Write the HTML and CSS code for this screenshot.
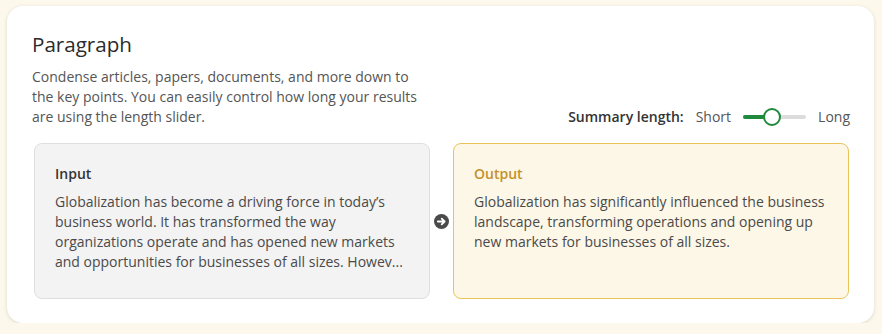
FILE: index.html
```html
<!DOCTYPE html>
<html lang="en">
<head>
    <meta charset="UTF-8">
    <meta name="viewport" content="width=device-width, initial-scale=1.0">
    <title>Paragraph Summarizer</title>
    <link rel="stylesheet" href="styles.css">
</head>
<body>
    <div class="card">
        <div class="card-head">
            <div class="intro">
                <h2>Paragraph</h2>
                <p>Condense articles, papers, documents, and more down to the key points. You can easily control how long your results are using the length slider.</p>
            </div>
            <div class="length">
                <span class="length-label">Summary length:</span>
                <span>Short</span>
                <div class="slider">
                    <div class="slider-fill"></div>
                    <div class="slider-thumb"></div>
                </div>
                <span>Long</span>
            </div>
        </div>
        <div class="compare">
            <div class="box box-input">
                <h3>Input</h3>
                <p>Globalization has become a driving force in today’s business world. It has transformed the way organizations operate and has opened new markets and opportunities for businesses of all sizes. Howev...</p>
            </div>
            <div class="arrow">
                <svg width="15" height="15" viewBox="0 0 14 14">
                    <circle cx="7" cy="7" r="7" fill="#4a4a4a"/>
                    <path d="M3.6 7h6.2M7.2 4.3L9.9 7 7.2 9.7" stroke="#fff" stroke-width="1.7" fill="none" stroke-linecap="round" stroke-linejoin="round"/>
                </svg>
            </div>
            <div class="box box-output">
                <h3>Output</h3>
                <p>Globalization has significantly influenced the business landscape, transforming operations and opening up new markets for businesses of all sizes.</p>
            </div>
        </div>
    </div>
</body>
</html>
```

FILE: styles.css
```css
body {
    font-family: "Open Sans", sans-serif;
    background-color: #fdf8ec;
    margin: 0;
    padding: 6px 8px 0 7px;
    color: #333;
}
.card {
    background-color: white;
    border-radius: 16px;
    box-shadow: 0 1px 4px rgba(0, 0, 0, 0.12);
    padding: 24px 24px 25px 25px;
    height: 268px;
}
.card-head {
    display: flex;
    justify-content: space-between;
    align-items: flex-end;
}
.intro h2 {
    margin: 0 0 9px;
    font-size: 20.6px;
    line-height: 28px;
    font-weight: 500;
    color: #2b2b2b;
}
.intro p {
    margin: 0;
    max-width: 392px;
    font-size: 14px;
    line-height: 20px;
    color: #555;
}
.length {
    display: flex;
    align-items: center;
    gap: 12px;
    font-size: 14px;
    line-height: 20px;
    color: #555;
}
.length-label {
    font-weight: 600;
    color: #333;
}
.slider {
    position: relative;
    width: 63px;
    height: 4px;
    border-radius: 2px;
    background-color: #dcdcdc;
}
.slider-fill {
    width: 28px;
    height: 4px;
    border-radius: 2px;
    background-color: #1f8a3c;
}
.slider-thumb {
    position: absolute;
    left: 20px;
    top: -7px;
    width: 14px;
    height: 14px;
    border: 2px solid #1f8a3c;
    border-radius: 50%;
    background-color: white;
}
.compare {
    display: grid;
    grid-template-columns: 1fr 23px 1fr;
    margin-top: 16px;
    padding: 0 1px 0 2px;
}
.box {
    border-radius: 8px;
    padding: 20px 20px 25px;
    height: 109px;
}
.box h3 {
    margin: 0 0 8px;
    font-size: 14px;
    line-height: 20px;
    font-weight: 600;
}
.box p {
    margin: 0;
    font-size: 14px;
    line-height: 20px;
    color: #4a4a4a;
}
.box-input {
    background-color: #f3f3f3;
    border: 1px solid #dedede;
}
.box-input h3 {
    color: #333;
}
.box-output {
    background-color: #fdf7e7;
    border: 1px solid #eac35a;
}
.box-output h3 {
    color: #c4912a;
}
.arrow {
    display: flex;
    align-items: center;
    justify-content: center;
}
```
